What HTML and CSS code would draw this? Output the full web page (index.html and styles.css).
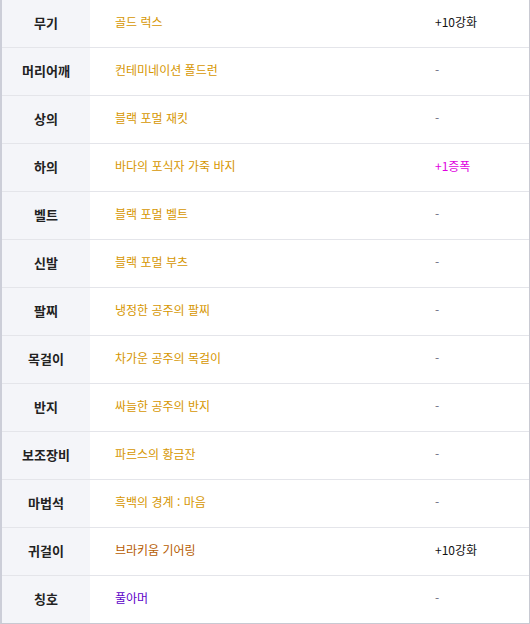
FILE: index.html
```html
<!DOCTYPE html>
<html lang="ko">
<head>
    <meta charset="UTF-8">
    <title>장착 장비</title>
    <link rel="stylesheet" href="styles.css">
</head>
<body>
    <div class="equip">
        <div class="row"><div class="slot">무기</div><div class="name epic">골드 럭스</div><div class="opt">+10강화</div></div>
        <div class="row"><div class="slot">머리어깨</div><div class="name epic">컨테미네이션 폴드런</div><div class="opt none">-</div></div>
        <div class="row"><div class="slot">상의</div><div class="name epic">블랙 포멀 재킷</div><div class="opt none">-</div></div>
        <div class="row"><div class="slot">하의</div><div class="name epic">바다의 포식자 가죽 바지</div><div class="opt amp">+1증폭</div></div>
        <div class="row"><div class="slot">벨트</div><div class="name epic">블랙 포멀 벨트</div><div class="opt none">-</div></div>
        <div class="row"><div class="slot">신발</div><div class="name epic">블랙 포멀 부츠</div><div class="opt none">-</div></div>
        <div class="row"><div class="slot">팔찌</div><div class="name epic">냉정한 공주의 팔찌</div><div class="opt none">-</div></div>
        <div class="row"><div class="slot">목걸이</div><div class="name epic">차가운 공주의 목걸이</div><div class="opt none">-</div></div>
        <div class="row"><div class="slot">반지</div><div class="name epic">싸늘한 공주의 반지</div><div class="opt none">-</div></div>
        <div class="row"><div class="slot">보조장비</div><div class="name epic">파르스의 황금잔</div><div class="opt none">-</div></div>
        <div class="row"><div class="slot">마법석</div><div class="name epic">흑백의 경계 : 마음</div><div class="opt none">-</div></div>
        <div class="row"><div class="slot">귀걸이</div><div class="name legend">브라키움 기어링</div><div class="opt">+10강화</div></div>
        <div class="row"><div class="slot">칭호</div><div class="name unique">풀아머</div><div class="opt none">-</div></div>
    </div>
</body>
</html>
```

FILE: styles.css
```css
body {
    margin: 0;
    padding: 0;
    background: #fff;
    font-family: "Noto Sans CJK KR", "Noto Sans", sans-serif;
}

.equip {
    width: 530px;
    box-sizing: border-box;
    border-left: 2px solid #ccced8;
    border-right: 1px solid #c8c9d2;
    border-bottom: 1px solid #c8c9d2;
}

.row {
    display: grid;
    grid-template-columns: 88px 320px 1fr;
    height: 48px;
    box-sizing: border-box;
    border-bottom: 1px solid #e4e5ea;
}

.row:last-child {
    border-bottom: none;
    height: 47px;
}

.row > div {
    display: flex;
    align-items: center;
    padding-bottom: 3px;
    line-height: 1;
}

.slot {
    justify-content: center;
    background-color: #f4f5f9;
    color: #222;
    font-size: 13px;
    font-weight: bold;
}

.name,
.opt {
    padding-left: 25px;
    font-size: 12px;
}

.opt {
    color: #111;
}

.opt.none {
    color: #707084;
}

.opt.amp {
    color: #e000e0;
}

.epic {
    color: #d69600;
}

.legend {
    color: #b65c00;
}

.unique {
    color: #5c00c8;
}
```
